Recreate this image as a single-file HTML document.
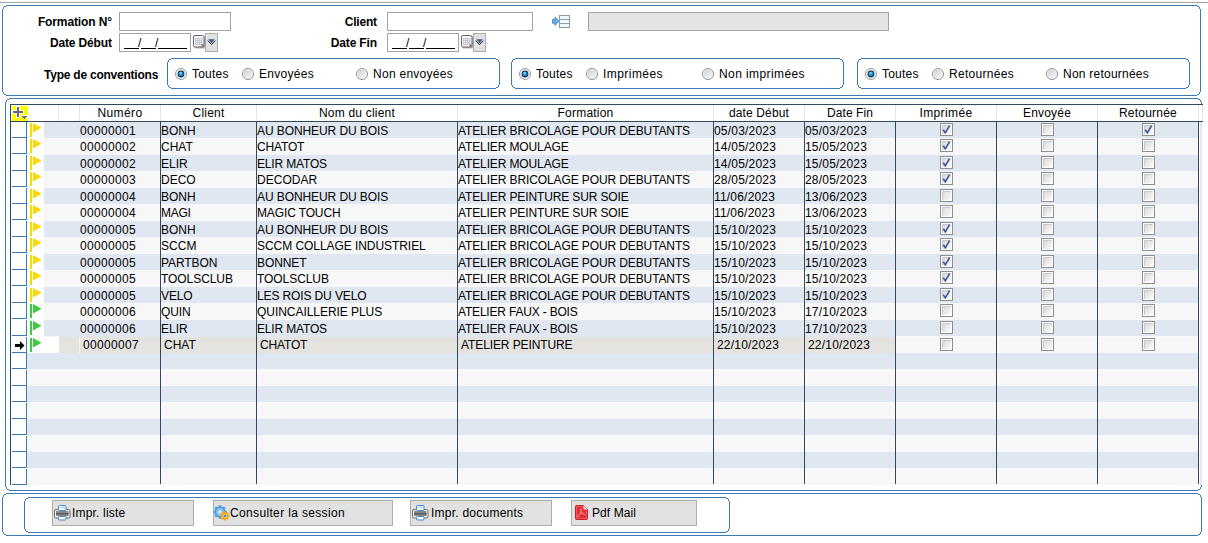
<!DOCTYPE html>
<html><head><meta charset="utf-8"><style>
html,body{margin:0;padding:0;background:#fff;}
body{width:1208px;height:543px;position:relative;overflow:hidden;font-family:"Liberation Sans",sans-serif;font-size:12px;color:#000;}
body>div,body>span,body>svg{position:absolute;}
.t{position:absolute;white-space:nowrap;line-height:14px;height:14px;}
.panel{border:1px solid #3a7ab5;border-radius:5px;}
.inp{border:1px solid #a3a3a3;}
.drop{width:11px;height:17px;background:#e1e1e1;border:1px solid #acacac;}
.drop svg{position:absolute;left:0;top:0;}
.btn{background:#e1e1e1;border:1px solid #adadad;}
.ic{position:absolute;}
</style></head><body>
<svg width="0" height="0" style="position:absolute;left:0;top:0"><defs><radialGradient id="rg1" cx="0.4" cy="0.3" r="0.7"><stop offset="0" stop-color="#b8ecff"/><stop offset="0.45" stop-color="#2a9ae0"/><stop offset="1" stop-color="#0f6aa8"/></radialGradient><linearGradient id="rg0" x1="0.2" y1="0" x2="0.8" y2="1"><stop offset="0" stop-color="#cdd3dc"/><stop offset="1" stop-color="#f4f4f4"/></linearGradient><linearGradient id="cg" x1="0" y1="0" x2="1" y2="1"><stop offset="0" stop-color="#d6d6d6"/><stop offset="1" stop-color="#fbfbfb"/></linearGradient></defs></svg>
<div style="left:0px;top:2px;width:1208px;height:1px;background:#a3a3a3"></div>
<div style="left:6px;top:5px;width:1191px;height:1px;background:#3a7ab5"></div>
<div style="left:6px;top:95px;width:1191px;height:1px;background:#3a7ab5"></div>
<div style="left:2px;top:9px;width:1px;height:83px;background:#3a7ab5"></div>
<div style="left:1200px;top:9px;width:1px;height:83px;background:#3a7ab5"></div>
<div style="left:4px;top:6px;width:1px;height:1px;background:#3a7ab5"></div>
<div style="left:5px;top:6px;width:1px;height:1px;background:#3a7ab5"></div>
<div style="left:3px;top:7px;width:1px;height:1px;background:#3a7ab5"></div>
<div style="left:3px;top:8px;width:1px;height:1px;background:#3a7ab5"></div>
<div style="left:1198px;top:6px;width:1px;height:1px;background:#3a7ab5"></div>
<div style="left:1197px;top:6px;width:1px;height:1px;background:#3a7ab5"></div>
<div style="left:1199px;top:7px;width:1px;height:1px;background:#3a7ab5"></div>
<div style="left:1199px;top:8px;width:1px;height:1px;background:#3a7ab5"></div>
<div style="left:4px;top:94px;width:1px;height:1px;background:#3a7ab5"></div>
<div style="left:5px;top:94px;width:1px;height:1px;background:#3a7ab5"></div>
<div style="left:3px;top:93px;width:1px;height:1px;background:#3a7ab5"></div>
<div style="left:3px;top:92px;width:1px;height:1px;background:#3a7ab5"></div>
<div style="left:1198px;top:94px;width:1px;height:1px;background:#3a7ab5"></div>
<div style="left:1197px;top:94px;width:1px;height:1px;background:#3a7ab5"></div>
<div style="left:1199px;top:93px;width:1px;height:1px;background:#3a7ab5"></div>
<div style="left:1199px;top:92px;width:1px;height:1px;background:#3a7ab5"></div>
<span class="t" style="right:1096.12px;top:15px;font-weight:bold;letter-spacing:-0.122px">Formation N°</span>
<span class="t" style="right:1096.13px;top:36px;font-weight:bold;letter-spacing:-0.134px">Date Début</span>
<span class="t" style="right:831.22px;top:15px;font-weight:bold;letter-spacing:-0.222px">Client</span>
<span class="t" style="right:831.17px;top:36px;font-weight:bold;letter-spacing:-0.167px">Date Fin</span>
<span class="t" style="left:44px;top:68px;font-weight:bold;letter-spacing:-0.229px">Type de conventions</span>
<div class="inp" style="left:119px;top:12px;width:110px;height:17px;background:#fff"></div>
<div class="inp" style="left:119px;top:33px;width:70px;height:17px;background:#fff"></div>
<div style="left:124px;top:48px;width:15px;height:1px;background:#000"></div>
<div style="left:141px;top:48px;width:15px;height:1px;background:#000"></div>
<div style="left:158px;top:48px;width:29px;height:1px;background:#000"></div>
<span class="t" style="left:138px;top:36px;">/</span>
<span class="t" style="left:155px;top:36px;">/</span>
<svg class="ic" style="left:193px;top:35px" width="13" height="14" viewBox="0 0 13 14"><rect x="1.5" y="1.5" width="11" height="12" rx="1.5" fill="#5a4e4c" opacity="0.45"/><rect x="0.5" y="0.5" width="10.5" height="11.5" rx="1.5" fill="#f6f8fc" stroke="#6f6260"/><rect x="2" y="3" width="7.5" height="7" fill="#c3c8d3"/><g fill="#f4f6fb"><rect x="3" y="4" width="1" height="1"/><rect x="5" y="4" width="1" height="1"/><rect x="7" y="4" width="1" height="1"/><rect x="3" y="6" width="1" height="1"/><rect x="5" y="6" width="1" height="1"/><rect x="7" y="6" width="1" height="1"/><rect x="3" y="8" width="1" height="1"/><rect x="5" y="8" width="1" height="1"/><rect x="7" y="8" width="1" height="1"/></g><rect x="8.5" y="9.5" width="2" height="2" fill="#6f6260"/></svg>
<div class="drop" style="left:205px;top:33px;"><svg width="11" height="17" viewBox="0 0 11 17"><path d="M1.8 6.6 L5.5 10.6 L9.2 6.6" fill="none" stroke="#222" stroke-width="1"/><path d="M2.2 5.2 L8.8 5.2 L5.5 9.2 Z" fill="#3e5c8c"/></svg></div>
<div class="inp" style="left:387px;top:12px;width:144px;height:17px;background:#fff"></div>
<div class="inp" style="left:387px;top:33px;width:70px;height:17px;background:#fff"></div>
<div style="left:392px;top:48px;width:15px;height:1px;background:#000"></div>
<div style="left:409px;top:48px;width:15px;height:1px;background:#000"></div>
<div style="left:426px;top:48px;width:29px;height:1px;background:#000"></div>
<span class="t" style="left:406px;top:36px;">/</span>
<span class="t" style="left:423px;top:36px;">/</span>
<svg class="ic" style="left:461px;top:35px" width="13" height="14" viewBox="0 0 13 14"><rect x="1.5" y="1.5" width="11" height="12" rx="1.5" fill="#5a4e4c" opacity="0.45"/><rect x="0.5" y="0.5" width="10.5" height="11.5" rx="1.5" fill="#f6f8fc" stroke="#6f6260"/><rect x="2" y="3" width="7.5" height="7" fill="#c3c8d3"/><g fill="#f4f6fb"><rect x="3" y="4" width="1" height="1"/><rect x="5" y="4" width="1" height="1"/><rect x="7" y="4" width="1" height="1"/><rect x="3" y="6" width="1" height="1"/><rect x="5" y="6" width="1" height="1"/><rect x="7" y="6" width="1" height="1"/><rect x="3" y="8" width="1" height="1"/><rect x="5" y="8" width="1" height="1"/><rect x="7" y="8" width="1" height="1"/></g><rect x="8.5" y="9.5" width="2" height="2" fill="#6f6260"/></svg>
<div class="drop" style="left:473px;top:33px;"><svg width="11" height="17" viewBox="0 0 11 17"><path d="M1.8 6.6 L5.5 10.6 L9.2 6.6" fill="none" stroke="#222" stroke-width="1"/><path d="M2.2 5.2 L8.8 5.2 L5.5 9.2 Z" fill="#3e5c8c"/></svg></div>
<svg class="ic" style="left:552px;top:15px" width="19" height="13" viewBox="0 0 19 13"><path d="M0.5 4.5 H3 V2 L7 6.3 L3 10.5 V8.2 H0.5 Z" fill="#62b2ee" stroke="#2f80c8" stroke-width="0.8"/><rect x="7.5" y="0.5" width="10" height="12" fill="#eafafd" stroke="#979797"/><rect x="8" y="4" width="9" height="1" fill="#9a9a9a"/><rect x="8" y="8" width="9" height="1" fill="#9a9a9a"/></svg>
<div class="inp" style="left:588px;top:12px;width:299px;height:17px;background:#e4e4e2"></div>
<div style="left:171px;top:58px;width:325px;height:1px;background:#3a7ab5"></div>
<div style="left:171px;top:88px;width:325px;height:1px;background:#3a7ab5"></div>
<div style="left:167px;top:62px;width:1px;height:23px;background:#3a7ab5"></div>
<div style="left:499px;top:62px;width:1px;height:23px;background:#3a7ab5"></div>
<div style="left:169px;top:59px;width:1px;height:1px;background:#3a7ab5"></div>
<div style="left:170px;top:59px;width:1px;height:1px;background:#3a7ab5"></div>
<div style="left:168px;top:60px;width:1px;height:1px;background:#3a7ab5"></div>
<div style="left:168px;top:61px;width:1px;height:1px;background:#3a7ab5"></div>
<div style="left:497px;top:59px;width:1px;height:1px;background:#3a7ab5"></div>
<div style="left:496px;top:59px;width:1px;height:1px;background:#3a7ab5"></div>
<div style="left:498px;top:60px;width:1px;height:1px;background:#3a7ab5"></div>
<div style="left:498px;top:61px;width:1px;height:1px;background:#3a7ab5"></div>
<div style="left:169px;top:87px;width:1px;height:1px;background:#3a7ab5"></div>
<div style="left:170px;top:87px;width:1px;height:1px;background:#3a7ab5"></div>
<div style="left:168px;top:86px;width:1px;height:1px;background:#3a7ab5"></div>
<div style="left:168px;top:85px;width:1px;height:1px;background:#3a7ab5"></div>
<div style="left:497px;top:87px;width:1px;height:1px;background:#3a7ab5"></div>
<div style="left:496px;top:87px;width:1px;height:1px;background:#3a7ab5"></div>
<div style="left:498px;top:86px;width:1px;height:1px;background:#3a7ab5"></div>
<div style="left:498px;top:85px;width:1px;height:1px;background:#3a7ab5"></div>
<div style="left:515px;top:58px;width:325px;height:1px;background:#3a7ab5"></div>
<div style="left:515px;top:88px;width:325px;height:1px;background:#3a7ab5"></div>
<div style="left:511px;top:62px;width:1px;height:23px;background:#3a7ab5"></div>
<div style="left:843px;top:62px;width:1px;height:23px;background:#3a7ab5"></div>
<div style="left:513px;top:59px;width:1px;height:1px;background:#3a7ab5"></div>
<div style="left:514px;top:59px;width:1px;height:1px;background:#3a7ab5"></div>
<div style="left:512px;top:60px;width:1px;height:1px;background:#3a7ab5"></div>
<div style="left:512px;top:61px;width:1px;height:1px;background:#3a7ab5"></div>
<div style="left:841px;top:59px;width:1px;height:1px;background:#3a7ab5"></div>
<div style="left:840px;top:59px;width:1px;height:1px;background:#3a7ab5"></div>
<div style="left:842px;top:60px;width:1px;height:1px;background:#3a7ab5"></div>
<div style="left:842px;top:61px;width:1px;height:1px;background:#3a7ab5"></div>
<div style="left:513px;top:87px;width:1px;height:1px;background:#3a7ab5"></div>
<div style="left:514px;top:87px;width:1px;height:1px;background:#3a7ab5"></div>
<div style="left:512px;top:86px;width:1px;height:1px;background:#3a7ab5"></div>
<div style="left:512px;top:85px;width:1px;height:1px;background:#3a7ab5"></div>
<div style="left:841px;top:87px;width:1px;height:1px;background:#3a7ab5"></div>
<div style="left:840px;top:87px;width:1px;height:1px;background:#3a7ab5"></div>
<div style="left:842px;top:86px;width:1px;height:1px;background:#3a7ab5"></div>
<div style="left:842px;top:85px;width:1px;height:1px;background:#3a7ab5"></div>
<div style="left:861px;top:58px;width:325px;height:1px;background:#3a7ab5"></div>
<div style="left:861px;top:88px;width:325px;height:1px;background:#3a7ab5"></div>
<div style="left:857px;top:62px;width:1px;height:23px;background:#3a7ab5"></div>
<div style="left:1189px;top:62px;width:1px;height:23px;background:#3a7ab5"></div>
<div style="left:859px;top:59px;width:1px;height:1px;background:#3a7ab5"></div>
<div style="left:860px;top:59px;width:1px;height:1px;background:#3a7ab5"></div>
<div style="left:858px;top:60px;width:1px;height:1px;background:#3a7ab5"></div>
<div style="left:858px;top:61px;width:1px;height:1px;background:#3a7ab5"></div>
<div style="left:1187px;top:59px;width:1px;height:1px;background:#3a7ab5"></div>
<div style="left:1186px;top:59px;width:1px;height:1px;background:#3a7ab5"></div>
<div style="left:1188px;top:60px;width:1px;height:1px;background:#3a7ab5"></div>
<div style="left:1188px;top:61px;width:1px;height:1px;background:#3a7ab5"></div>
<div style="left:859px;top:87px;width:1px;height:1px;background:#3a7ab5"></div>
<div style="left:860px;top:87px;width:1px;height:1px;background:#3a7ab5"></div>
<div style="left:858px;top:86px;width:1px;height:1px;background:#3a7ab5"></div>
<div style="left:858px;top:85px;width:1px;height:1px;background:#3a7ab5"></div>
<div style="left:1187px;top:87px;width:1px;height:1px;background:#3a7ab5"></div>
<div style="left:1186px;top:87px;width:1px;height:1px;background:#3a7ab5"></div>
<div style="left:1188px;top:86px;width:1px;height:1px;background:#3a7ab5"></div>
<div style="left:1188px;top:85px;width:1px;height:1px;background:#3a7ab5"></div>
<svg class="ic" style="left:175px;top:68px" width="12" height="12" viewBox="0 0 12 12"><circle cx="6" cy="6" r="5.5" fill="#f2f2f2" stroke="#9a9a9a"/><circle cx="6" cy="6" r="3.4" fill="#14314a"/><circle cx="6" cy="6" r="2.5" fill="url(#rg1)"/></svg>
<span class="t" style="left:192px;top:67px;;letter-spacing:0.219px">Toutes</span>
<svg class="ic" style="left:242px;top:68px" width="12" height="12" viewBox="0 0 12 12"><circle cx="6" cy="6" r="5.5" fill="#fafafa" stroke="#8f8f8f"/><circle cx="6" cy="6" r="4.2" fill="url(#rg0)"/></svg>
<span class="t" style="left:259px;top:67px;;letter-spacing:0.288px">Envoyées</span>
<svg class="ic" style="left:356px;top:68px" width="12" height="12" viewBox="0 0 12 12"><circle cx="6" cy="6" r="5.5" fill="#fafafa" stroke="#8f8f8f"/><circle cx="6" cy="6" r="4.2" fill="url(#rg0)"/></svg>
<span class="t" style="left:373px;top:67px;;letter-spacing:0.274px">Non envoyées</span>
<svg class="ic" style="left:519px;top:68px" width="12" height="12" viewBox="0 0 12 12"><circle cx="6" cy="6" r="5.5" fill="#f2f2f2" stroke="#9a9a9a"/><circle cx="6" cy="6" r="3.4" fill="#14314a"/><circle cx="6" cy="6" r="2.5" fill="url(#rg1)"/></svg>
<span class="t" style="left:536px;top:67px;;letter-spacing:0.219px">Toutes</span>
<svg class="ic" style="left:586px;top:68px" width="12" height="12" viewBox="0 0 12 12"><circle cx="6" cy="6" r="5.5" fill="#fafafa" stroke="#8f8f8f"/><circle cx="6" cy="6" r="4.2" fill="url(#rg0)"/></svg>
<span class="t" style="left:603px;top:67px;;letter-spacing:0.443px">Imprimées</span>
<svg class="ic" style="left:702px;top:68px" width="12" height="12" viewBox="0 0 12 12"><circle cx="6" cy="6" r="5.5" fill="#fafafa" stroke="#8f8f8f"/><circle cx="6" cy="6" r="4.2" fill="url(#rg0)"/></svg>
<span class="t" style="left:719px;top:67px;;letter-spacing:0.409px">Non imprimées</span>
<svg class="ic" style="left:865px;top:68px" width="12" height="12" viewBox="0 0 12 12"><circle cx="6" cy="6" r="5.5" fill="#f2f2f2" stroke="#9a9a9a"/><circle cx="6" cy="6" r="3.4" fill="#14314a"/><circle cx="6" cy="6" r="2.5" fill="url(#rg1)"/></svg>
<span class="t" style="left:882px;top:67px;;letter-spacing:0.219px">Toutes</span>
<svg class="ic" style="left:932px;top:68px" width="12" height="12" viewBox="0 0 12 12"><circle cx="6" cy="6" r="5.5" fill="#fafafa" stroke="#8f8f8f"/><circle cx="6" cy="6" r="4.2" fill="url(#rg0)"/></svg>
<span class="t" style="left:949px;top:67px;;letter-spacing:0.296px">Retournées</span>
<svg class="ic" style="left:1046px;top:68px" width="12" height="12" viewBox="0 0 12 12"><circle cx="6" cy="6" r="5.5" fill="#fafafa" stroke="#8f8f8f"/><circle cx="6" cy="6" r="4.2" fill="url(#rg0)"/></svg>
<span class="t" style="left:1063px;top:67px;;letter-spacing:0.235px">Non retournées</span>
<div style="left:9px;top:98px;width:1189px;height:1px;background:#3a7ab5"></div>
<div style="left:9px;top:490px;width:1189px;height:1px;background:#3a7ab5"></div>
<div style="left:5px;top:102px;width:1px;height:385px;background:#3a7ab5"></div>
<div style="left:1201px;top:102px;width:1px;height:385px;background:#3a7ab5"></div>
<div style="left:7px;top:99px;width:1px;height:1px;background:#3a7ab5"></div>
<div style="left:8px;top:99px;width:1px;height:1px;background:#3a7ab5"></div>
<div style="left:6px;top:100px;width:1px;height:1px;background:#3a7ab5"></div>
<div style="left:6px;top:101px;width:1px;height:1px;background:#3a7ab5"></div>
<div style="left:1199px;top:99px;width:1px;height:1px;background:#3a7ab5"></div>
<div style="left:1198px;top:99px;width:1px;height:1px;background:#3a7ab5"></div>
<div style="left:1200px;top:100px;width:1px;height:1px;background:#3a7ab5"></div>
<div style="left:1200px;top:101px;width:1px;height:1px;background:#3a7ab5"></div>
<div style="left:7px;top:489px;width:1px;height:1px;background:#3a7ab5"></div>
<div style="left:8px;top:489px;width:1px;height:1px;background:#3a7ab5"></div>
<div style="left:6px;top:488px;width:1px;height:1px;background:#3a7ab5"></div>
<div style="left:6px;top:487px;width:1px;height:1px;background:#3a7ab5"></div>
<div style="left:1199px;top:489px;width:1px;height:1px;background:#3a7ab5"></div>
<div style="left:1198px;top:489px;width:1px;height:1px;background:#3a7ab5"></div>
<div style="left:1200px;top:488px;width:1px;height:1px;background:#3a7ab5"></div>
<div style="left:1200px;top:487px;width:1px;height:1px;background:#3a7ab5"></div>
<div style="left:10px;top:104px;width:1193px;height:1px;background:#2e4a5c"></div>
<div style="left:11px;top:105px;width:1192px;height:16px;background:#fff"></div>
<div style="left:1202px;top:105px;width:1px;height:16px;background:#e3e3e3"></div>
<div style="left:10px;top:121px;width:1193px;height:1px;background:#2e4a5c"></div>
<div style="left:10px;top:104px;width:1px;height:381px;background:#2e4a5c"></div>
<div style="left:58px;top:105px;width:1px;height:16px;background:#e3e3e3"></div>
<div style="left:79px;top:105px;width:1px;height:16px;background:#e3e3e3"></div>
<div style="left:160px;top:105px;width:1px;height:16px;background:#e3e3e3"></div>
<div style="left:256px;top:105px;width:1px;height:16px;background:#e3e3e3"></div>
<div style="left:457px;top:105px;width:1px;height:16px;background:#e3e3e3"></div>
<div style="left:713px;top:105px;width:1px;height:16px;background:#e3e3e3"></div>
<div style="left:804px;top:105px;width:1px;height:16px;background:#e3e3e3"></div>
<div style="left:895px;top:105px;width:1px;height:16px;background:#e3e3e3"></div>
<div style="left:996px;top:105px;width:1px;height:16px;background:#e3e3e3"></div>
<div style="left:1097px;top:105px;width:1px;height:16px;background:#e3e3e3"></div>
<div style="left:1198px;top:105px;width:1px;height:16px;background:#e3e3e3"></div>
<svg class="ic" style="left:12px;top:106px" width="16" height="15" viewBox="0 0 16 15" shape-rendering="crispEdges"><rect x="0" y="0" width="16" height="15" fill="#ffff00"/><rect x="0" y="4" width="12" height="4" fill="#fff"/><rect x="4" y="0" width="4" height="12" fill="#fff"/><path d="M9 9 H16 V11 L14 13 H12 L10 11 H9 Z" fill="#fff"/><rect x="1" y="5" width="10" height="2" fill="#6c6c6c"/><rect x="5" y="1" width="2" height="10" fill="#6c6c6c"/><rect x="10" y="10" width="5" height="1" fill="#6c6c6c"/><rect x="11" y="11" width="3" height="1" fill="#6c6c6c"/><rect x="12" y="12" width="1" height="1" fill="#6c6c6c"/></svg>
<span class="t" style="left:80px;width:80px;text-align:center;top:106px;;letter-spacing:0.387px">Numéro</span>
<span class="t" style="left:161px;width:95px;text-align:center;top:106px;;letter-spacing:0.220px">Client</span>
<span class="t" style="left:257px;width:200px;text-align:center;top:106px;;letter-spacing:0.203px">Nom du client</span>
<span class="t" style="left:458px;width:255px;text-align:center;top:106px;;letter-spacing:0.220px">Formation</span>
<span class="t" style="left:714px;width:90px;text-align:center;top:106px;;letter-spacing:0.129px">date Début</span>
<span class="t" style="left:805px;width:90px;text-align:center;top:106px;;letter-spacing:0.081px">Date Fin</span>
<span class="t" style="left:896px;width:100px;text-align:center;top:106px;;letter-spacing:0.374px">Imprimée</span>
<span class="t" style="left:997px;width:100px;text-align:center;top:106px;;letter-spacing:0.186px">Envoyée</span>
<span class="t" style="left:1098px;width:100px;text-align:center;top:106px;;letter-spacing:0.218px">Retournée</span>
<div style="left:44px;top:122px;width:1154px;height:16px;background:#e1e7f0"></div>
<div style="left:12px;top:122px;width:15px;height:16px;border-right:1px solid #3a7ab5;border-bottom:1px solid #3a7ab5;box-sizing:border-box;"></div>
<svg class="ic" style="left:30px;top:123px" width="12" height="14" viewBox="0 0 12 14"><rect x="0" y="0" width="2" height="14" fill="#ffd800"/><path d="M3 0 L11.5 4.7 L3 9.5 Z" fill="#ffd800"/></svg>
<span class="t" style="left:80px;top:124px;;letter-spacing:0.326px">00000001</span>
<span class="t" style="left:161px;top:124px;;letter-spacing:-0.017px">BONH</span>
<span class="t" style="left:257px;top:124px;;letter-spacing:-0.083px">AU BONHEUR DU BOIS</span>
<span class="t" style="left:458px;top:124px;;letter-spacing:-0.112px">ATELIER BRICOLAGE POUR DEBUTANTS</span>
<span class="t" style="left:714px;top:124px;;letter-spacing:0.194px">05/03/2023</span>
<span class="t" style="left:805px;top:124px;;letter-spacing:0.194px">05/03/2023</span>
<svg class="ic" style="left:940px;top:123px" width="13" height="13" viewBox="0 0 13 13"><rect x="0.5" y="0.5" width="12" height="12" fill="#fdfdfd" stroke="#8e8e8e"/><rect x="2" y="2" width="9" height="9" fill="url(#cg)"/><path d="M2.5 10.5 V2.5 H10.5" fill="none" stroke="#c5cad3" stroke-width="1"/><path d="M3.3 6.8 L5.3 9.8 L9.6 2.6" fill="none" stroke="#3a5496" stroke-width="1.6"/></svg>
<svg class="ic" style="left:1041px;top:123px" width="13" height="13" viewBox="0 0 13 13"><rect x="0.5" y="0.5" width="12" height="12" fill="#fdfdfd" stroke="#8e8e8e"/><rect x="2" y="2" width="9" height="9" fill="url(#cg)"/><path d="M2.5 10.5 V2.5 H10.5" fill="none" stroke="#c5cad3" stroke-width="1"/></svg>
<svg class="ic" style="left:1142px;top:123px" width="13" height="13" viewBox="0 0 13 13"><rect x="0.5" y="0.5" width="12" height="12" fill="#fdfdfd" stroke="#8e8e8e"/><rect x="2" y="2" width="9" height="9" fill="url(#cg)"/><path d="M2.5 10.5 V2.5 H10.5" fill="none" stroke="#c5cad3" stroke-width="1"/><path d="M3.3 6.8 L5.3 9.8 L9.6 2.6" fill="none" stroke="#3a5496" stroke-width="1.6"/></svg>
<div style="left:44px;top:138px;width:1154px;height:17px;background:#f7f7f7"></div>
<div style="left:12px;top:138px;width:15px;height:16px;border-right:1px solid #3a7ab5;border-bottom:1px solid #3a7ab5;box-sizing:border-box;"></div>
<svg class="ic" style="left:30px;top:139px" width="12" height="14" viewBox="0 0 12 14"><rect x="0" y="0" width="2" height="14" fill="#ffd800"/><path d="M3 0 L11.5 4.7 L3 9.5 Z" fill="#ffd800"/></svg>
<span class="t" style="left:80px;top:140px;;letter-spacing:0.326px">00000002</span>
<span class="t" style="left:161px;top:140px;;letter-spacing:-0.017px">CHAT</span>
<span class="t" style="left:257px;top:140px;;letter-spacing:-0.155px">CHATOT</span>
<span class="t" style="left:458px;top:140px;;letter-spacing:-0.124px">ATELIER MOULAGE</span>
<span class="t" style="left:714px;top:140px;;letter-spacing:0.194px">14/05/2023</span>
<span class="t" style="left:805px;top:140px;;letter-spacing:0.194px">15/05/2023</span>
<svg class="ic" style="left:940px;top:139px" width="13" height="13" viewBox="0 0 13 13"><rect x="0.5" y="0.5" width="12" height="12" fill="#fdfdfd" stroke="#8e8e8e"/><rect x="2" y="2" width="9" height="9" fill="url(#cg)"/><path d="M2.5 10.5 V2.5 H10.5" fill="none" stroke="#c5cad3" stroke-width="1"/><path d="M3.3 6.8 L5.3 9.8 L9.6 2.6" fill="none" stroke="#3a5496" stroke-width="1.6"/></svg>
<svg class="ic" style="left:1041px;top:139px" width="13" height="13" viewBox="0 0 13 13"><rect x="0.5" y="0.5" width="12" height="12" fill="#fdfdfd" stroke="#8e8e8e"/><rect x="2" y="2" width="9" height="9" fill="url(#cg)"/><path d="M2.5 10.5 V2.5 H10.5" fill="none" stroke="#c5cad3" stroke-width="1"/></svg>
<svg class="ic" style="left:1142px;top:139px" width="13" height="13" viewBox="0 0 13 13"><rect x="0.5" y="0.5" width="12" height="12" fill="#fdfdfd" stroke="#8e8e8e"/><rect x="2" y="2" width="9" height="9" fill="url(#cg)"/><path d="M2.5 10.5 V2.5 H10.5" fill="none" stroke="#c5cad3" stroke-width="1"/></svg>
<div style="left:44px;top:155px;width:1154px;height:16px;background:#e1e7f0"></div>
<div style="left:12px;top:155px;width:15px;height:16px;border-right:1px solid #3a7ab5;border-bottom:1px solid #3a7ab5;box-sizing:border-box;"></div>
<svg class="ic" style="left:30px;top:156px" width="12" height="14" viewBox="0 0 12 14"><rect x="0" y="0" width="2" height="14" fill="#ffd800"/><path d="M3 0 L11.5 4.7 L3 9.5 Z" fill="#ffd800"/></svg>
<span class="t" style="left:80px;top:157px;;letter-spacing:0.326px">00000002</span>
<span class="t" style="left:161px;top:157px;;letter-spacing:-0.019px">ELIR</span>
<span class="t" style="left:257px;top:157px;;letter-spacing:-0.168px">ELIR MATOS</span>
<span class="t" style="left:458px;top:157px;;letter-spacing:-0.124px">ATELIER MOULAGE</span>
<span class="t" style="left:714px;top:157px;;letter-spacing:0.194px">14/05/2023</span>
<span class="t" style="left:805px;top:157px;;letter-spacing:0.194px">15/05/2023</span>
<svg class="ic" style="left:940px;top:156px" width="13" height="13" viewBox="0 0 13 13"><rect x="0.5" y="0.5" width="12" height="12" fill="#fdfdfd" stroke="#8e8e8e"/><rect x="2" y="2" width="9" height="9" fill="url(#cg)"/><path d="M2.5 10.5 V2.5 H10.5" fill="none" stroke="#c5cad3" stroke-width="1"/><path d="M3.3 6.8 L5.3 9.8 L9.6 2.6" fill="none" stroke="#3a5496" stroke-width="1.6"/></svg>
<svg class="ic" style="left:1041px;top:156px" width="13" height="13" viewBox="0 0 13 13"><rect x="0.5" y="0.5" width="12" height="12" fill="#fdfdfd" stroke="#8e8e8e"/><rect x="2" y="2" width="9" height="9" fill="url(#cg)"/><path d="M2.5 10.5 V2.5 H10.5" fill="none" stroke="#c5cad3" stroke-width="1"/></svg>
<svg class="ic" style="left:1142px;top:156px" width="13" height="13" viewBox="0 0 13 13"><rect x="0.5" y="0.5" width="12" height="12" fill="#fdfdfd" stroke="#8e8e8e"/><rect x="2" y="2" width="9" height="9" fill="url(#cg)"/><path d="M2.5 10.5 V2.5 H10.5" fill="none" stroke="#c5cad3" stroke-width="1"/></svg>
<div style="left:44px;top:171px;width:1154px;height:17px;background:#f7f7f7"></div>
<div style="left:12px;top:171px;width:15px;height:16px;border-right:1px solid #3a7ab5;border-bottom:1px solid #3a7ab5;box-sizing:border-box;"></div>
<svg class="ic" style="left:30px;top:172px" width="12" height="14" viewBox="0 0 12 14"><rect x="0" y="0" width="2" height="14" fill="#ffd800"/><path d="M3 0 L11.5 4.7 L3 9.5 Z" fill="#ffd800"/></svg>
<span class="t" style="left:80px;top:173px;;letter-spacing:0.326px">00000003</span>
<span class="t" style="left:161px;top:173px;;letter-spacing:-0.017px">DECO</span>
<span class="t" style="left:257px;top:173px;;letter-spacing:0.042px">DECODAR</span>
<span class="t" style="left:458px;top:173px;;letter-spacing:-0.112px">ATELIER BRICOLAGE POUR DEBUTANTS</span>
<span class="t" style="left:714px;top:173px;;letter-spacing:0.194px">28/05/2023</span>
<span class="t" style="left:805px;top:173px;;letter-spacing:0.194px">28/05/2023</span>
<svg class="ic" style="left:940px;top:172px" width="13" height="13" viewBox="0 0 13 13"><rect x="0.5" y="0.5" width="12" height="12" fill="#fdfdfd" stroke="#8e8e8e"/><rect x="2" y="2" width="9" height="9" fill="url(#cg)"/><path d="M2.5 10.5 V2.5 H10.5" fill="none" stroke="#c5cad3" stroke-width="1"/><path d="M3.3 6.8 L5.3 9.8 L9.6 2.6" fill="none" stroke="#3a5496" stroke-width="1.6"/></svg>
<svg class="ic" style="left:1041px;top:172px" width="13" height="13" viewBox="0 0 13 13"><rect x="0.5" y="0.5" width="12" height="12" fill="#fdfdfd" stroke="#8e8e8e"/><rect x="2" y="2" width="9" height="9" fill="url(#cg)"/><path d="M2.5 10.5 V2.5 H10.5" fill="none" stroke="#c5cad3" stroke-width="1"/></svg>
<svg class="ic" style="left:1142px;top:172px" width="13" height="13" viewBox="0 0 13 13"><rect x="0.5" y="0.5" width="12" height="12" fill="#fdfdfd" stroke="#8e8e8e"/><rect x="2" y="2" width="9" height="9" fill="url(#cg)"/><path d="M2.5 10.5 V2.5 H10.5" fill="none" stroke="#c5cad3" stroke-width="1"/></svg>
<div style="left:44px;top:188px;width:1154px;height:16px;background:#e1e7f0"></div>
<div style="left:12px;top:188px;width:15px;height:16px;border-right:1px solid #3a7ab5;border-bottom:1px solid #3a7ab5;box-sizing:border-box;"></div>
<svg class="ic" style="left:30px;top:189px" width="12" height="14" viewBox="0 0 12 14"><rect x="0" y="0" width="2" height="14" fill="#ffd800"/><path d="M3 0 L11.5 4.7 L3 9.5 Z" fill="#ffd800"/></svg>
<span class="t" style="left:80px;top:190px;;letter-spacing:0.326px">00000004</span>
<span class="t" style="left:161px;top:190px;;letter-spacing:-0.017px">BONH</span>
<span class="t" style="left:257px;top:190px;;letter-spacing:-0.083px">AU BONHEUR DU BOIS</span>
<span class="t" style="left:458px;top:190px;;letter-spacing:-0.128px">ATELIER PEINTURE SUR SOIE</span>
<span class="t" style="left:714px;top:190px;;letter-spacing:0.194px">11/06/2023</span>
<span class="t" style="left:805px;top:190px;;letter-spacing:0.194px">13/06/2023</span>
<svg class="ic" style="left:940px;top:189px" width="13" height="13" viewBox="0 0 13 13"><rect x="0.5" y="0.5" width="12" height="12" fill="#fdfdfd" stroke="#8e8e8e"/><rect x="2" y="2" width="9" height="9" fill="url(#cg)"/><path d="M2.5 10.5 V2.5 H10.5" fill="none" stroke="#c5cad3" stroke-width="1"/></svg>
<svg class="ic" style="left:1041px;top:189px" width="13" height="13" viewBox="0 0 13 13"><rect x="0.5" y="0.5" width="12" height="12" fill="#fdfdfd" stroke="#8e8e8e"/><rect x="2" y="2" width="9" height="9" fill="url(#cg)"/><path d="M2.5 10.5 V2.5 H10.5" fill="none" stroke="#c5cad3" stroke-width="1"/></svg>
<svg class="ic" style="left:1142px;top:189px" width="13" height="13" viewBox="0 0 13 13"><rect x="0.5" y="0.5" width="12" height="12" fill="#fdfdfd" stroke="#8e8e8e"/><rect x="2" y="2" width="9" height="9" fill="url(#cg)"/><path d="M2.5 10.5 V2.5 H10.5" fill="none" stroke="#c5cad3" stroke-width="1"/></svg>
<div style="left:44px;top:204px;width:1154px;height:17px;background:#f7f7f7"></div>
<div style="left:12px;top:204px;width:15px;height:16px;border-right:1px solid #3a7ab5;border-bottom:1px solid #3a7ab5;box-sizing:border-box;"></div>
<svg class="ic" style="left:30px;top:205px" width="12" height="14" viewBox="0 0 12 14"><rect x="0" y="0" width="2" height="14" fill="#ffd800"/><path d="M3 0 L11.5 4.7 L3 9.5 Z" fill="#ffd800"/></svg>
<span class="t" style="left:80px;top:206px;;letter-spacing:0.326px">00000004</span>
<span class="t" style="left:161px;top:206px;;letter-spacing:-0.267px">MAGI</span>
<span class="t" style="left:257px;top:206px;;letter-spacing:-0.130px">MAGIC TOUCH</span>
<span class="t" style="left:458px;top:206px;;letter-spacing:-0.128px">ATELIER PEINTURE SUR SOIE</span>
<span class="t" style="left:714px;top:206px;;letter-spacing:0.194px">11/06/2023</span>
<span class="t" style="left:805px;top:206px;;letter-spacing:0.194px">13/06/2023</span>
<svg class="ic" style="left:940px;top:205px" width="13" height="13" viewBox="0 0 13 13"><rect x="0.5" y="0.5" width="12" height="12" fill="#fdfdfd" stroke="#8e8e8e"/><rect x="2" y="2" width="9" height="9" fill="url(#cg)"/><path d="M2.5 10.5 V2.5 H10.5" fill="none" stroke="#c5cad3" stroke-width="1"/></svg>
<svg class="ic" style="left:1041px;top:205px" width="13" height="13" viewBox="0 0 13 13"><rect x="0.5" y="0.5" width="12" height="12" fill="#fdfdfd" stroke="#8e8e8e"/><rect x="2" y="2" width="9" height="9" fill="url(#cg)"/><path d="M2.5 10.5 V2.5 H10.5" fill="none" stroke="#c5cad3" stroke-width="1"/></svg>
<svg class="ic" style="left:1142px;top:205px" width="13" height="13" viewBox="0 0 13 13"><rect x="0.5" y="0.5" width="12" height="12" fill="#fdfdfd" stroke="#8e8e8e"/><rect x="2" y="2" width="9" height="9" fill="url(#cg)"/><path d="M2.5 10.5 V2.5 H10.5" fill="none" stroke="#c5cad3" stroke-width="1"/></svg>
<div style="left:44px;top:221px;width:1154px;height:16px;background:#e1e7f0"></div>
<div style="left:12px;top:221px;width:15px;height:16px;border-right:1px solid #3a7ab5;border-bottom:1px solid #3a7ab5;box-sizing:border-box;"></div>
<svg class="ic" style="left:30px;top:222px" width="12" height="14" viewBox="0 0 12 14"><rect x="0" y="0" width="2" height="14" fill="#ffd800"/><path d="M3 0 L11.5 4.7 L3 9.5 Z" fill="#ffd800"/></svg>
<span class="t" style="left:80px;top:223px;;letter-spacing:0.326px">00000005</span>
<span class="t" style="left:161px;top:223px;;letter-spacing:-0.017px">BONH</span>
<span class="t" style="left:257px;top:223px;;letter-spacing:-0.083px">AU BONHEUR DU BOIS</span>
<span class="t" style="left:458px;top:223px;;letter-spacing:-0.112px">ATELIER BRICOLAGE POUR DEBUTANTS</span>
<span class="t" style="left:714px;top:223px;;letter-spacing:0.194px">15/10/2023</span>
<span class="t" style="left:805px;top:223px;;letter-spacing:0.194px">15/10/2023</span>
<svg class="ic" style="left:940px;top:222px" width="13" height="13" viewBox="0 0 13 13"><rect x="0.5" y="0.5" width="12" height="12" fill="#fdfdfd" stroke="#8e8e8e"/><rect x="2" y="2" width="9" height="9" fill="url(#cg)"/><path d="M2.5 10.5 V2.5 H10.5" fill="none" stroke="#c5cad3" stroke-width="1"/><path d="M3.3 6.8 L5.3 9.8 L9.6 2.6" fill="none" stroke="#3a5496" stroke-width="1.6"/></svg>
<svg class="ic" style="left:1041px;top:222px" width="13" height="13" viewBox="0 0 13 13"><rect x="0.5" y="0.5" width="12" height="12" fill="#fdfdfd" stroke="#8e8e8e"/><rect x="2" y="2" width="9" height="9" fill="url(#cg)"/><path d="M2.5 10.5 V2.5 H10.5" fill="none" stroke="#c5cad3" stroke-width="1"/></svg>
<svg class="ic" style="left:1142px;top:222px" width="13" height="13" viewBox="0 0 13 13"><rect x="0.5" y="0.5" width="12" height="12" fill="#fdfdfd" stroke="#8e8e8e"/><rect x="2" y="2" width="9" height="9" fill="url(#cg)"/><path d="M2.5 10.5 V2.5 H10.5" fill="none" stroke="#c5cad3" stroke-width="1"/></svg>
<div style="left:44px;top:237px;width:1154px;height:17px;background:#f7f7f7"></div>
<div style="left:12px;top:237px;width:15px;height:16px;border-right:1px solid #3a7ab5;border-bottom:1px solid #3a7ab5;box-sizing:border-box;"></div>
<svg class="ic" style="left:30px;top:238px" width="12" height="14" viewBox="0 0 12 14"><rect x="0" y="0" width="2" height="14" fill="#ffd800"/><path d="M3 0 L11.5 4.7 L3 9.5 Z" fill="#ffd800"/></svg>
<span class="t" style="left:80px;top:239px;;letter-spacing:0.326px">00000005</span>
<span class="t" style="left:161px;top:239px;;letter-spacing:0.067px">SCCM</span>
<span class="t" style="left:257px;top:239px;;letter-spacing:-0.058px">SCCM COLLAGE INDUSTRIEL</span>
<span class="t" style="left:458px;top:239px;;letter-spacing:-0.112px">ATELIER BRICOLAGE POUR DEBUTANTS</span>
<span class="t" style="left:714px;top:239px;;letter-spacing:0.194px">15/10/2023</span>
<span class="t" style="left:805px;top:239px;;letter-spacing:0.194px">15/10/2023</span>
<svg class="ic" style="left:940px;top:238px" width="13" height="13" viewBox="0 0 13 13"><rect x="0.5" y="0.5" width="12" height="12" fill="#fdfdfd" stroke="#8e8e8e"/><rect x="2" y="2" width="9" height="9" fill="url(#cg)"/><path d="M2.5 10.5 V2.5 H10.5" fill="none" stroke="#c5cad3" stroke-width="1"/><path d="M3.3 6.8 L5.3 9.8 L9.6 2.6" fill="none" stroke="#3a5496" stroke-width="1.6"/></svg>
<svg class="ic" style="left:1041px;top:238px" width="13" height="13" viewBox="0 0 13 13"><rect x="0.5" y="0.5" width="12" height="12" fill="#fdfdfd" stroke="#8e8e8e"/><rect x="2" y="2" width="9" height="9" fill="url(#cg)"/><path d="M2.5 10.5 V2.5 H10.5" fill="none" stroke="#c5cad3" stroke-width="1"/></svg>
<svg class="ic" style="left:1142px;top:238px" width="13" height="13" viewBox="0 0 13 13"><rect x="0.5" y="0.5" width="12" height="12" fill="#fdfdfd" stroke="#8e8e8e"/><rect x="2" y="2" width="9" height="9" fill="url(#cg)"/><path d="M2.5 10.5 V2.5 H10.5" fill="none" stroke="#c5cad3" stroke-width="1"/></svg>
<div style="left:44px;top:254px;width:1154px;height:16px;background:#e1e7f0"></div>
<div style="left:12px;top:254px;width:15px;height:16px;border-right:1px solid #3a7ab5;border-bottom:1px solid #3a7ab5;box-sizing:border-box;"></div>
<svg class="ic" style="left:30px;top:255px" width="12" height="14" viewBox="0 0 12 14"><rect x="0" y="0" width="2" height="14" fill="#ffd800"/><path d="M3 0 L11.5 4.7 L3 9.5 Z" fill="#ffd800"/></svg>
<span class="t" style="left:80px;top:256px;;letter-spacing:0.326px">00000005</span>
<span class="t" style="left:161px;top:256px;;letter-spacing:-0.101px">PARTBON</span>
<span class="t" style="left:257px;top:256px;;letter-spacing:-0.101px">BONNET</span>
<span class="t" style="left:458px;top:256px;;letter-spacing:-0.112px">ATELIER BRICOLAGE POUR DEBUTANTS</span>
<span class="t" style="left:714px;top:256px;;letter-spacing:0.194px">15/10/2023</span>
<span class="t" style="left:805px;top:256px;;letter-spacing:0.194px">15/10/2023</span>
<svg class="ic" style="left:940px;top:255px" width="13" height="13" viewBox="0 0 13 13"><rect x="0.5" y="0.5" width="12" height="12" fill="#fdfdfd" stroke="#8e8e8e"/><rect x="2" y="2" width="9" height="9" fill="url(#cg)"/><path d="M2.5 10.5 V2.5 H10.5" fill="none" stroke="#c5cad3" stroke-width="1"/><path d="M3.3 6.8 L5.3 9.8 L9.6 2.6" fill="none" stroke="#3a5496" stroke-width="1.6"/></svg>
<svg class="ic" style="left:1041px;top:255px" width="13" height="13" viewBox="0 0 13 13"><rect x="0.5" y="0.5" width="12" height="12" fill="#fdfdfd" stroke="#8e8e8e"/><rect x="2" y="2" width="9" height="9" fill="url(#cg)"/><path d="M2.5 10.5 V2.5 H10.5" fill="none" stroke="#c5cad3" stroke-width="1"/></svg>
<svg class="ic" style="left:1142px;top:255px" width="13" height="13" viewBox="0 0 13 13"><rect x="0.5" y="0.5" width="12" height="12" fill="#fdfdfd" stroke="#8e8e8e"/><rect x="2" y="2" width="9" height="9" fill="url(#cg)"/><path d="M2.5 10.5 V2.5 H10.5" fill="none" stroke="#c5cad3" stroke-width="1"/></svg>
<div style="left:44px;top:270px;width:1154px;height:17px;background:#f7f7f7"></div>
<div style="left:12px;top:270px;width:15px;height:16px;border-right:1px solid #3a7ab5;border-bottom:1px solid #3a7ab5;box-sizing:border-box;"></div>
<svg class="ic" style="left:30px;top:271px" width="12" height="14" viewBox="0 0 12 14"><rect x="0" y="0" width="2" height="14" fill="#ffd800"/><path d="M3 0 L11.5 4.7 L3 9.5 Z" fill="#ffd800"/></svg>
<span class="t" style="left:80px;top:272px;;letter-spacing:0.326px">00000005</span>
<span class="t" style="left:161px;top:272px;;letter-spacing:-0.065px">TOOLSCLUB</span>
<span class="t" style="left:257px;top:272px;;letter-spacing:-0.065px">TOOLSCLUB</span>
<span class="t" style="left:458px;top:272px;;letter-spacing:-0.112px">ATELIER BRICOLAGE POUR DEBUTANTS</span>
<span class="t" style="left:714px;top:272px;;letter-spacing:0.194px">15/10/2023</span>
<span class="t" style="left:805px;top:272px;;letter-spacing:0.194px">15/10/2023</span>
<svg class="ic" style="left:940px;top:271px" width="13" height="13" viewBox="0 0 13 13"><rect x="0.5" y="0.5" width="12" height="12" fill="#fdfdfd" stroke="#8e8e8e"/><rect x="2" y="2" width="9" height="9" fill="url(#cg)"/><path d="M2.5 10.5 V2.5 H10.5" fill="none" stroke="#c5cad3" stroke-width="1"/><path d="M3.3 6.8 L5.3 9.8 L9.6 2.6" fill="none" stroke="#3a5496" stroke-width="1.6"/></svg>
<svg class="ic" style="left:1041px;top:271px" width="13" height="13" viewBox="0 0 13 13"><rect x="0.5" y="0.5" width="12" height="12" fill="#fdfdfd" stroke="#8e8e8e"/><rect x="2" y="2" width="9" height="9" fill="url(#cg)"/><path d="M2.5 10.5 V2.5 H10.5" fill="none" stroke="#c5cad3" stroke-width="1"/></svg>
<svg class="ic" style="left:1142px;top:271px" width="13" height="13" viewBox="0 0 13 13"><rect x="0.5" y="0.5" width="12" height="12" fill="#fdfdfd" stroke="#8e8e8e"/><rect x="2" y="2" width="9" height="9" fill="url(#cg)"/><path d="M2.5 10.5 V2.5 H10.5" fill="none" stroke="#c5cad3" stroke-width="1"/></svg>
<div style="left:44px;top:287px;width:1154px;height:16px;background:#e1e7f0"></div>
<div style="left:12px;top:287px;width:15px;height:16px;border-right:1px solid #3a7ab5;border-bottom:1px solid #3a7ab5;box-sizing:border-box;"></div>
<svg class="ic" style="left:30px;top:288px" width="12" height="14" viewBox="0 0 12 14"><rect x="0" y="0" width="2" height="14" fill="#ffd800"/><path d="M3 0 L11.5 4.7 L3 9.5 Z" fill="#ffd800"/></svg>
<span class="t" style="left:80px;top:289px;;letter-spacing:0.326px">00000005</span>
<span class="t" style="left:161px;top:289px;;letter-spacing:-0.104px">VELO</span>
<span class="t" style="left:257px;top:289px;;letter-spacing:-0.123px">LES ROIS DU VELO</span>
<span class="t" style="left:458px;top:289px;;letter-spacing:-0.112px">ATELIER BRICOLAGE POUR DEBUTANTS</span>
<span class="t" style="left:714px;top:289px;;letter-spacing:0.194px">15/10/2023</span>
<span class="t" style="left:805px;top:289px;;letter-spacing:0.194px">15/10/2023</span>
<svg class="ic" style="left:940px;top:288px" width="13" height="13" viewBox="0 0 13 13"><rect x="0.5" y="0.5" width="12" height="12" fill="#fdfdfd" stroke="#8e8e8e"/><rect x="2" y="2" width="9" height="9" fill="url(#cg)"/><path d="M2.5 10.5 V2.5 H10.5" fill="none" stroke="#c5cad3" stroke-width="1"/><path d="M3.3 6.8 L5.3 9.8 L9.6 2.6" fill="none" stroke="#3a5496" stroke-width="1.6"/></svg>
<svg class="ic" style="left:1041px;top:288px" width="13" height="13" viewBox="0 0 13 13"><rect x="0.5" y="0.5" width="12" height="12" fill="#fdfdfd" stroke="#8e8e8e"/><rect x="2" y="2" width="9" height="9" fill="url(#cg)"/><path d="M2.5 10.5 V2.5 H10.5" fill="none" stroke="#c5cad3" stroke-width="1"/></svg>
<svg class="ic" style="left:1142px;top:288px" width="13" height="13" viewBox="0 0 13 13"><rect x="0.5" y="0.5" width="12" height="12" fill="#fdfdfd" stroke="#8e8e8e"/><rect x="2" y="2" width="9" height="9" fill="url(#cg)"/><path d="M2.5 10.5 V2.5 H10.5" fill="none" stroke="#c5cad3" stroke-width="1"/></svg>
<div style="left:44px;top:303px;width:1154px;height:17px;background:#f7f7f7"></div>
<div style="left:12px;top:303px;width:15px;height:16px;border-right:1px solid #3a7ab5;border-bottom:1px solid #3a7ab5;box-sizing:border-box;"></div>
<svg class="ic" style="left:30px;top:304px" width="12" height="14" viewBox="0 0 12 14"><rect x="0" y="0" width="2" height="14" fill="#3ccc3c"/><path d="M3 0 L11.5 4.7 L3 9.5 Z" fill="#3ccc3c"/></svg>
<span class="t" style="left:80px;top:305px;;letter-spacing:0.326px">00000006</span>
<span class="t" style="left:161px;top:305px;;letter-spacing:-0.100px">QUIN</span>
<span class="t" style="left:257px;top:305px;;letter-spacing:-0.047px">QUINCAILLERIE PLUS</span>
<span class="t" style="left:458px;top:305px;;letter-spacing:-0.189px">ATELIER FAUX - BOIS</span>
<span class="t" style="left:714px;top:305px;;letter-spacing:0.194px">15/10/2023</span>
<span class="t" style="left:805px;top:305px;;letter-spacing:0.194px">17/10/2023</span>
<svg class="ic" style="left:940px;top:304px" width="13" height="13" viewBox="0 0 13 13"><rect x="0.5" y="0.5" width="12" height="12" fill="#fdfdfd" stroke="#8e8e8e"/><rect x="2" y="2" width="9" height="9" fill="url(#cg)"/><path d="M2.5 10.5 V2.5 H10.5" fill="none" stroke="#c5cad3" stroke-width="1"/></svg>
<svg class="ic" style="left:1041px;top:304px" width="13" height="13" viewBox="0 0 13 13"><rect x="0.5" y="0.5" width="12" height="12" fill="#fdfdfd" stroke="#8e8e8e"/><rect x="2" y="2" width="9" height="9" fill="url(#cg)"/><path d="M2.5 10.5 V2.5 H10.5" fill="none" stroke="#c5cad3" stroke-width="1"/></svg>
<svg class="ic" style="left:1142px;top:304px" width="13" height="13" viewBox="0 0 13 13"><rect x="0.5" y="0.5" width="12" height="12" fill="#fdfdfd" stroke="#8e8e8e"/><rect x="2" y="2" width="9" height="9" fill="url(#cg)"/><path d="M2.5 10.5 V2.5 H10.5" fill="none" stroke="#c5cad3" stroke-width="1"/></svg>
<div style="left:44px;top:320px;width:1154px;height:16px;background:#e1e7f0"></div>
<div style="left:12px;top:320px;width:15px;height:16px;border-right:1px solid #3a7ab5;border-bottom:1px solid #3a7ab5;box-sizing:border-box;"></div>
<svg class="ic" style="left:30px;top:321px" width="12" height="14" viewBox="0 0 12 14"><rect x="0" y="0" width="2" height="14" fill="#3ccc3c"/><path d="M3 0 L11.5 4.7 L3 9.5 Z" fill="#3ccc3c"/></svg>
<span class="t" style="left:80px;top:322px;;letter-spacing:0.326px">00000006</span>
<span class="t" style="left:161px;top:322px;;letter-spacing:-0.019px">ELIR</span>
<span class="t" style="left:257px;top:322px;;letter-spacing:-0.168px">ELIR MATOS</span>
<span class="t" style="left:458px;top:322px;;letter-spacing:-0.189px">ATELIER FAUX - BOIS</span>
<span class="t" style="left:714px;top:322px;;letter-spacing:0.194px">15/10/2023</span>
<span class="t" style="left:805px;top:322px;;letter-spacing:0.194px">17/10/2023</span>
<svg class="ic" style="left:940px;top:321px" width="13" height="13" viewBox="0 0 13 13"><rect x="0.5" y="0.5" width="12" height="12" fill="#fdfdfd" stroke="#8e8e8e"/><rect x="2" y="2" width="9" height="9" fill="url(#cg)"/><path d="M2.5 10.5 V2.5 H10.5" fill="none" stroke="#c5cad3" stroke-width="1"/></svg>
<svg class="ic" style="left:1041px;top:321px" width="13" height="13" viewBox="0 0 13 13"><rect x="0.5" y="0.5" width="12" height="12" fill="#fdfdfd" stroke="#8e8e8e"/><rect x="2" y="2" width="9" height="9" fill="url(#cg)"/><path d="M2.5 10.5 V2.5 H10.5" fill="none" stroke="#c5cad3" stroke-width="1"/></svg>
<svg class="ic" style="left:1142px;top:321px" width="13" height="13" viewBox="0 0 13 13"><rect x="0.5" y="0.5" width="12" height="12" fill="#fdfdfd" stroke="#8e8e8e"/><rect x="2" y="2" width="9" height="9" fill="url(#cg)"/><path d="M2.5 10.5 V2.5 H10.5" fill="none" stroke="#c5cad3" stroke-width="1"/></svg>
<div style="left:44px;top:336px;width:1154px;height:17px;background:#f7f7f7"></div>
<div style="left:12px;top:337px;width:15px;height:16px;border-right:1px solid #3a7ab5;border-bottom:1px solid #3a7ab5;box-sizing:border-box;"></div>
<div style="left:44px;top:337px;width:15px;height:16px;background:#ffffff"></div>
<div style="left:59px;top:336px;width:836px;height:1px;background:#e1e7f0"></div>
<div style="left:59px;top:337px;width:836px;height:16px;background:#e4e3df"></div>
<div style="left:896px;top:336px;width:302px;height:1px;background:#fbfbfb"></div>
<div style="left:79px;top:337px;width:1px;height:16px;background:#f3f3f1"></div>
<svg class="ic" style="left:15px;top:341px" width="10" height="9" viewBox="0 0 10 9"><path d="M0 3 H5 V0 L9.5 4.5 L5 9 V6 H0 Z" fill="#000"/></svg>
<svg class="ic" style="left:30px;top:338px" width="12" height="14" viewBox="0 0 12 14"><rect x="0" y="0" width="2" height="14" fill="#3ccc3c"/><path d="M3 0 L11.5 4.7 L3 9.5 Z" fill="#3ccc3c"/></svg>
<span class="t" style="left:83px;top:338px;;letter-spacing:0.326px">00000007</span>
<span class="t" style="left:164px;top:338px;;letter-spacing:-0.017px">CHAT</span>
<span class="t" style="left:260px;top:338px;;letter-spacing:-0.155px">CHATOT</span>
<span class="t" style="left:461px;top:338px;;letter-spacing:-0.101px">ATELIER PEINTURE</span>
<span class="t" style="left:717px;top:338px;;letter-spacing:0.194px">22/10/2023</span>
<span class="t" style="left:808px;top:338px;;letter-spacing:0.194px">22/10/2023</span>
<svg class="ic" style="left:940px;top:338px" width="13" height="13" viewBox="0 0 13 13"><rect x="0.5" y="0.5" width="12" height="12" fill="#fdfdfd" stroke="#8e8e8e"/><rect x="2" y="2" width="9" height="9" fill="url(#cg)"/><path d="M2.5 10.5 V2.5 H10.5" fill="none" stroke="#c5cad3" stroke-width="1"/></svg>
<svg class="ic" style="left:1041px;top:338px" width="13" height="13" viewBox="0 0 13 13"><rect x="0.5" y="0.5" width="12" height="12" fill="#fdfdfd" stroke="#8e8e8e"/><rect x="2" y="2" width="9" height="9" fill="url(#cg)"/><path d="M2.5 10.5 V2.5 H10.5" fill="none" stroke="#c5cad3" stroke-width="1"/></svg>
<svg class="ic" style="left:1142px;top:338px" width="13" height="13" viewBox="0 0 13 13"><rect x="0.5" y="0.5" width="12" height="12" fill="#fdfdfd" stroke="#8e8e8e"/><rect x="2" y="2" width="9" height="9" fill="url(#cg)"/><path d="M2.5 10.5 V2.5 H10.5" fill="none" stroke="#c5cad3" stroke-width="1"/></svg>
<div style="left:27px;top:353px;width:1171px;height:16px;background:#e1e7f0"></div>
<div style="left:12px;top:353px;width:15px;height:16px;border-right:1px solid #3a7ab5;border-bottom:1px solid #3a7ab5;box-sizing:border-box;"></div>
<div style="left:27px;top:369px;width:1171px;height:17px;background:#f7f7f7"></div>
<div style="left:12px;top:370px;width:15px;height:16px;border-right:1px solid #3a7ab5;border-bottom:1px solid #3a7ab5;box-sizing:border-box;"></div>
<div style="left:27px;top:386px;width:1171px;height:16px;background:#e1e7f0"></div>
<div style="left:12px;top:386px;width:15px;height:16px;border-right:1px solid #3a7ab5;border-bottom:1px solid #3a7ab5;box-sizing:border-box;"></div>
<div style="left:27px;top:402px;width:1171px;height:17px;background:#f7f7f7"></div>
<div style="left:12px;top:403px;width:15px;height:16px;border-right:1px solid #3a7ab5;border-bottom:1px solid #3a7ab5;box-sizing:border-box;"></div>
<div style="left:27px;top:419px;width:1171px;height:16px;background:#e1e7f0"></div>
<div style="left:12px;top:419px;width:15px;height:16px;border-right:1px solid #3a7ab5;border-bottom:1px solid #3a7ab5;box-sizing:border-box;"></div>
<div style="left:27px;top:435px;width:1171px;height:17px;background:#f7f7f7"></div>
<div style="left:12px;top:436px;width:15px;height:16px;border-right:1px solid #3a7ab5;border-bottom:1px solid #3a7ab5;box-sizing:border-box;"></div>
<div style="left:27px;top:452px;width:1171px;height:16px;background:#e1e7f0"></div>
<div style="left:12px;top:452px;width:15px;height:16px;border-right:1px solid #3a7ab5;border-bottom:1px solid #3a7ab5;box-sizing:border-box;"></div>
<div style="left:27px;top:468px;width:1171px;height:17px;background:#f7f7f7"></div>
<div style="left:12px;top:469px;width:15px;height:16px;border-right:1px solid #3a7ab5;border-bottom:1px solid #3a7ab5;box-sizing:border-box;"></div>
<div style="left:160px;top:121px;width:1px;height:363px;background:#2e4a5c"></div>
<div style="left:256px;top:121px;width:1px;height:363px;background:#2e4a5c"></div>
<div style="left:457px;top:121px;width:1px;height:363px;background:#2e4a5c"></div>
<div style="left:713px;top:121px;width:1px;height:363px;background:#2e4a5c"></div>
<div style="left:804px;top:121px;width:1px;height:363px;background:#2e4a5c"></div>
<div style="left:895px;top:121px;width:1px;height:363px;background:#2e4a5c"></div>
<div style="left:996px;top:121px;width:1px;height:363px;background:#2e4a5c"></div>
<div style="left:1097px;top:121px;width:1px;height:363px;background:#2e4a5c"></div>
<div style="left:1198px;top:121px;width:1px;height:363px;background:#2e4a5c"></div>
<div style="left:1199px;top:122px;width:4px;height:363px;background:#fff"></div>
<div style="left:1200px;top:122px;width:2px;height:363px;background:#e2e8f0"></div>
<div style="left:6px;top:493px;width:1192px;height:1px;background:#3a7ab5"></div>
<div style="left:6px;top:535px;width:1192px;height:1px;background:#3a7ab5"></div>
<div style="left:2px;top:497px;width:1px;height:35px;background:#3a7ab5"></div>
<div style="left:1201px;top:497px;width:1px;height:35px;background:#3a7ab5"></div>
<div style="left:4px;top:494px;width:1px;height:1px;background:#3a7ab5"></div>
<div style="left:5px;top:494px;width:1px;height:1px;background:#3a7ab5"></div>
<div style="left:3px;top:495px;width:1px;height:1px;background:#3a7ab5"></div>
<div style="left:3px;top:496px;width:1px;height:1px;background:#3a7ab5"></div>
<div style="left:1199px;top:494px;width:1px;height:1px;background:#3a7ab5"></div>
<div style="left:1198px;top:494px;width:1px;height:1px;background:#3a7ab5"></div>
<div style="left:1200px;top:495px;width:1px;height:1px;background:#3a7ab5"></div>
<div style="left:1200px;top:496px;width:1px;height:1px;background:#3a7ab5"></div>
<div style="left:4px;top:534px;width:1px;height:1px;background:#3a7ab5"></div>
<div style="left:5px;top:534px;width:1px;height:1px;background:#3a7ab5"></div>
<div style="left:3px;top:533px;width:1px;height:1px;background:#3a7ab5"></div>
<div style="left:3px;top:532px;width:1px;height:1px;background:#3a7ab5"></div>
<div style="left:1199px;top:534px;width:1px;height:1px;background:#3a7ab5"></div>
<div style="left:1198px;top:534px;width:1px;height:1px;background:#3a7ab5"></div>
<div style="left:1200px;top:533px;width:1px;height:1px;background:#3a7ab5"></div>
<div style="left:1200px;top:532px;width:1px;height:1px;background:#3a7ab5"></div>
<div style="left:28px;top:497px;width:698px;height:1px;background:#3a7ab5"></div>
<div style="left:28px;top:532px;width:698px;height:1px;background:#3a7ab5"></div>
<div style="left:24px;top:501px;width:1px;height:28px;background:#3a7ab5"></div>
<div style="left:729px;top:501px;width:1px;height:28px;background:#3a7ab5"></div>
<div style="left:26px;top:498px;width:1px;height:1px;background:#3a7ab5"></div>
<div style="left:27px;top:498px;width:1px;height:1px;background:#3a7ab5"></div>
<div style="left:25px;top:499px;width:1px;height:1px;background:#3a7ab5"></div>
<div style="left:25px;top:500px;width:1px;height:1px;background:#3a7ab5"></div>
<div style="left:727px;top:498px;width:1px;height:1px;background:#3a7ab5"></div>
<div style="left:726px;top:498px;width:1px;height:1px;background:#3a7ab5"></div>
<div style="left:728px;top:499px;width:1px;height:1px;background:#3a7ab5"></div>
<div style="left:728px;top:500px;width:1px;height:1px;background:#3a7ab5"></div>
<div style="left:26px;top:531px;width:1px;height:1px;background:#3a7ab5"></div>
<div style="left:27px;top:531px;width:1px;height:1px;background:#3a7ab5"></div>
<div style="left:25px;top:530px;width:1px;height:1px;background:#3a7ab5"></div>
<div style="left:25px;top:529px;width:1px;height:1px;background:#3a7ab5"></div>
<div style="left:727px;top:531px;width:1px;height:1px;background:#3a7ab5"></div>
<div style="left:726px;top:531px;width:1px;height:1px;background:#3a7ab5"></div>
<div style="left:728px;top:530px;width:1px;height:1px;background:#3a7ab5"></div>
<div style="left:728px;top:529px;width:1px;height:1px;background:#3a7ab5"></div>
<div class="btn" style="left:52px;top:500px;width:140px;height:24px;"></div>
<svg class="ic" style="left:54px;top:505px" width="17" height="16" viewBox="0 0 17 16"><rect x="0.5" y="4.5" width="15.5" height="8.5" rx="1.5" fill="#f0f0f0" stroke="#6e6e6e"/><rect x="2" y="6" width="12.5" height="5" fill="#8a8a8a"/><rect x="2" y="8" width="12.5" height="1.5" fill="#5c5c5c"/><rect x="4.5" y="0.5" width="7.5" height="5" rx="1" fill="#fbfdff" stroke="#3a86d0"/><rect x="5.5" y="2" width="5.5" height="1" fill="#a8d4f4"/><rect x="4.5" y="11.5" width="7.5" height="3.5" rx="1" fill="#fbfdff" stroke="#3a86d0"/></svg>
<span class="t" style="left:72px;top:506px;;letter-spacing:0.181px">Impr. liste</span>
<div class="btn" style="left:213px;top:500px;width:178px;height:24px;"></div>
<svg class="ic" style="left:213px;top:504px" width="17" height="17" viewBox="0 0 17 17"><g transform="translate(7,8)"><rect x="-1.4" y="-6.8" width="2.8" height="3" fill="#5aa2e2" transform="rotate(0)"/><rect x="-1.4" y="-6.8" width="2.8" height="3" fill="#5aa2e2" transform="rotate(45)"/><rect x="-1.4" y="-6.8" width="2.8" height="3" fill="#5aa2e2" transform="rotate(90)"/><rect x="-1.4" y="-6.8" width="2.8" height="3" fill="#5aa2e2" transform="rotate(135)"/><rect x="-1.4" y="-6.8" width="2.8" height="3" fill="#5aa2e2" transform="rotate(180)"/><rect x="-1.4" y="-6.8" width="2.8" height="3" fill="#5aa2e2" transform="rotate(225)"/><rect x="-1.4" y="-6.8" width="2.8" height="3" fill="#5aa2e2" transform="rotate(270)"/><rect x="-1.4" y="-6.8" width="2.8" height="3" fill="#5aa2e2" transform="rotate(315)"/><circle r="4.9" fill="#6ab0ea" stroke="#3a88cc" stroke-width="0.8"/><circle r="3.2" fill="none" stroke="#a8d4f6" stroke-width="0.8"/><circle r="2" fill="#e4e4e4"/></g><g transform="translate(12,12)"><rect x="-1" y="-4.6" width="2" height="2.2" fill="#f4b020" transform="rotate(0)"/><rect x="-1" y="-4.6" width="2" height="2.2" fill="#f4b020" transform="rotate(45)"/><rect x="-1" y="-4.6" width="2" height="2.2" fill="#f4b020" transform="rotate(90)"/><rect x="-1" y="-4.6" width="2" height="2.2" fill="#f4b020" transform="rotate(135)"/><rect x="-1" y="-4.6" width="2" height="2.2" fill="#f4b020" transform="rotate(180)"/><rect x="-1" y="-4.6" width="2" height="2.2" fill="#f4b020" transform="rotate(225)"/><rect x="-1" y="-4.6" width="2" height="2.2" fill="#f4b020" transform="rotate(270)"/><rect x="-1" y="-4.6" width="2" height="2.2" fill="#f4b020" transform="rotate(315)"/><circle r="3.2" fill="#f6c040" stroke="#e09010" stroke-width="0.7"/><circle r="1.2" fill="#3a8ee0"/></g></svg>
<span class="t" style="left:230px;top:506px;;letter-spacing:0.347px">Consulter la session</span>
<div class="btn" style="left:410px;top:500px;width:140px;height:24px;"></div>
<svg class="ic" style="left:412px;top:505px" width="17" height="16" viewBox="0 0 17 16"><rect x="0.5" y="4.5" width="15.5" height="8.5" rx="1.5" fill="#f0f0f0" stroke="#6e6e6e"/><rect x="2" y="6" width="12.5" height="5" fill="#8a8a8a"/><rect x="2" y="8" width="12.5" height="1.5" fill="#5c5c5c"/><rect x="4.5" y="0.5" width="7.5" height="5" rx="1" fill="#fbfdff" stroke="#3a86d0"/><rect x="5.5" y="2" width="5.5" height="1" fill="#a8d4f4"/><rect x="4.5" y="11.5" width="7.5" height="3.5" rx="1" fill="#fbfdff" stroke="#3a86d0"/></svg>
<span class="t" style="left:431px;top:506px;;letter-spacing:0.242px">Impr. documents</span>
<div class="btn" style="left:571px;top:500px;width:124px;height:24px;"></div>
<svg class="ic" style="left:575px;top:505px" width="14" height="15" viewBox="0 0 14 15"><path d="M1.5 0.5 H8.5 L12.5 4.5 V13.5 Q12.5 14.5 11.5 14.5 H1.5 Q0.5 14.5 0.5 13.5 V1.5 Q0.5 0.5 1.5 0.5 Z" fill="#e42a30" stroke="#c81c22"/><path d="M1.6 13.4 V1.6 H8 L11.4 5 V13.4 Z" fill="none" stroke="#f27074" stroke-width="0.8"/><path d="M8.5 0.5 V4.5 H12.5 Z" fill="#fde4e4"/><path d="M2.5 12 L6 7.5 L6 3.5 M6 7.5 L10 9.5" fill="none" stroke="#ffc0c0" stroke-width="0.9"/></svg>
<span class="t" style="left:592px;top:506px;;letter-spacing:0.082px">Pdf Mail</span>
</body></html>
